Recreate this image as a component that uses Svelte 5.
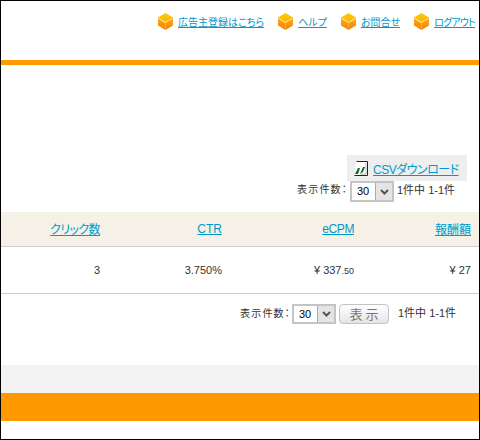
<script>
	const nav = ['広告主登録はこちら', 'ヘルプ', 'お問合せ', 'ログアウト'];
	const cols = [
		{ label: 'クリック数', value: '3', width: 100 },
		{ label: 'CTR', value: '3.750%', width: 122 },
		{ label: 'eCPM', value: '¥ 337', small: '.50', width: 132 },
		{ label: '報酬額', value: '¥ 27', width: 117 }
	];
</script>

{#snippet box()}
	<svg class="box" width="15" height="17" viewBox="0 0 15 17" aria-hidden="true">
		<defs>
			<linearGradient id="box-top" x1="0" y1="0" x2="0" y2="1">
				<stop offset="0" stop-color="#ffcc00" />
				<stop offset="1" stop-color="#ffb400" />
			</linearGradient>
			<linearGradient id="box-side" x1="0" y1="0" x2="0" y2="1">
				<stop offset="0" stop-color="#ffae1a" />
				<stop offset="1" stop-color="#f57f00" />
			</linearGradient>
		</defs>
		<path d="M7.5 0 15 4.5 7.5 9 0 4.5Z" fill="url(#box-top)" />
		<path d="M0 4.5 7.5 9V17L0 12.5Z" fill="url(#box-side)" />
		<path d="M15 4.5 7.5 9V17L15 12.5Z" fill="url(#box-side)" />
		<path d="M0.5 5.5 7.5 9.5 14.5 5.5" fill="none" stroke="#ffe6b0" stroke-width="1" />
	</svg>
{/snippet}

{#snippet perPage(cls)}
	<span class="label {cls}">表示件数：</span>
	<span class="select">
		<span class="val">30</span>
		<span class="arrow">
			<svg width="9" height="6" viewBox="0 0 9 6" aria-hidden="true"><path d="M1 1 4.5 4.5 8 1" fill="none" stroke="#555" stroke-width="2" /></svg>
		</span>
	</span>
{/snippet}

<div class="page">
	<header class="head">
		<nav class="nav">
			{#each nav as item}
				<span class="nav-item">
					{@render box()}
					<a href="#top">{item}</a>
				</span>
			{/each}
		</nav>
	</header>
	<div class="rule"></div>

	<main class="main">
		<div class="csv">
			<svg class="csv-ico" width="15" height="15" viewBox="0 0 15 15" aria-hidden="true">
				<path d="M3.5 0.5H14.5V14.5H1.5" fill="#fff" stroke="#222" />
				<path d="M2 13 5 7 7 7 5 13ZM7 13 10 6 12 6 10 11Z" fill="#0f6a2c" />
				<path d="M13 2V13H7" fill="none" stroke="#bbb" />
			</svg>
			<a href="#top">CSVダウンロード</a>
		</div>

		<div class="pager top">
			{@render perPage('wide')}
			<span class="count">1件中 1-1件</span>
		</div>

		<div class="row thead">
			{#each cols as c}
				<span class="cell" style="width:{c.width}px"><a href="#top">{c.label}</a></span>
			{/each}
		</div>
		<div class="row tbody">
			{#each cols as c}
				<span class="cell" style="width:{c.width}px">{c.value}{#if c.small}<small>{c.small}</small>{/if}</span>
			{/each}
		</div>

		<div class="pager bottom">
			{@render perPage('')}
			<button class="show" type="button">表 示</button>
			<span class="count">1件中 1-1件</span>
		</div>
	</main>

	<div class="foot-gray"></div>
	<div class="foot-orange"></div>
	<div class="foot-white"></div>
</div>

<style>
	:global(body) {
		margin: 0;
		background: #fff;
	}

	.page {
		box-sizing: border-box;
		width: 480px;
		height: 440px;
		border: 1px solid #000;
		overflow: hidden;
		font-family: "Liberation Sans", "Noto Sans CJK JP", sans-serif;
		font-size: 11px;
		font-feature-settings: "palt";
		color: #333;
		background: #fff;
	}

	a {
		color: #0099cc;
		text-decoration: underline;
	}

	.head {
		height: 59px;
	}

	.nav {
		display: flex;
		justify-content: flex-end;
		gap: 14px;
		padding: 12px 4px 0 0;
	}

	.nav-item {
		display: flex;
		align-items: center;
		gap: 5px;
		height: 17px;
		white-space: nowrap;
	}

	.nav-item a {
		font-size: 10px;
	}

	.nav-item:last-child a {
		letter-spacing: -0.8px;
	}

	.rule {
		height: 5px;
		background: #ff9900;
	}

	.main {
		box-sizing: border-box;
		height: 300px;
		padding-top: 90px;
	}

	.csv {
		box-sizing: border-box;
		display: flex;
		align-items: center;
		gap: 5px;
		width: 120px;
		height: 26px;
		margin-left: 346px;
		padding-left: 6px;
		background: #eeeeee;
	}

	.csv a {
		font-size: 12px;
		letter-spacing: -0.5px;
	}

	.pager {
		display: flex;
		align-items: center;
		white-space: nowrap;
	}

	.pager.top {
		height: 21px;
		padding-left: 296px;
	}

	.pager.top .label,
	.pager.top .count {
		margin-bottom: 6px;
	}

	.pager.bottom {
		height: 20px;
		margin-top: 10px;
		padding-left: 239px;
	}

	.pager.bottom .label,
	.pager.bottom .count {
		margin-bottom: 4px;
	}

	.label {
		width: 52px;
		font-size: 10px;
		letter-spacing: 1.2px;
	}

	.label.wide {
		width: 53px;
	}

	.select {
		box-sizing: border-box;
		display: flex;
		width: 44px;
		height: 100%;
		border: 2px solid #c4c4c4;
		background: #fff;
	}

	.val {
		flex: 1;
		padding-left: 5px;
		font: 11px/17px "Liberation Sans", sans-serif;
		color: #000;
	}

	.arrow {
		display: flex;
		align-items: center;
		justify-content: center;
		width: 16px;
		background: #e4e4e4;
		border-left: 1px solid #aaaaaa;
	}

	.count {
		font-size: 11px;
		margin-left: 3px;
	}

	.bottom .count {
		margin-left: 9px;
	}

	.show {
		box-sizing: border-box;
		width: 50px;
		height: 20px;
		margin-left: 3px;
		padding: 0;
		border: 1px solid #c4c4c4;
		border-radius: 4px;
		background: linear-gradient(#ffffff, #f0f0f0 60%, #e4e4e4);
		font: 13px/18px "Noto Sans CJK JP", sans-serif;
		color: #777;
	}

	.row {
		display: flex;
		box-sizing: border-box;
		border-bottom: 1px solid #cccccc;
	}

	.thead {
		height: 35px;
		margin-top: 10px;
		background: #f5f1e6;
		align-items: center;
		padding-bottom: 1px;
	}

	.tbody {
		height: 47px;
		align-items: center;
		font-size: 11px;
		padding-bottom: 1px;
	}

	.cell {
		display: block;
		box-sizing: border-box;
		text-align: right;
		white-space: nowrap;
	}

	.cell:first-child {
		margin-left: -1px;
	}

	.thead a {
		font-size: 12px;
	}

	.thead .cell:first-child a {
		letter-spacing: -0.6px;
	}

	.thead .cell:nth-child(3) a {
		letter-spacing: -0.4px;
	}

	small {
		font-size: 9px;
	}

	.foot-gray {
		height: 28px;
		background: #f3f3f3;
	}

	.foot-orange {
		height: 28px;
		background: #ff9900;
	}

	.foot-white {
		height: 18px;
	}
</style>
